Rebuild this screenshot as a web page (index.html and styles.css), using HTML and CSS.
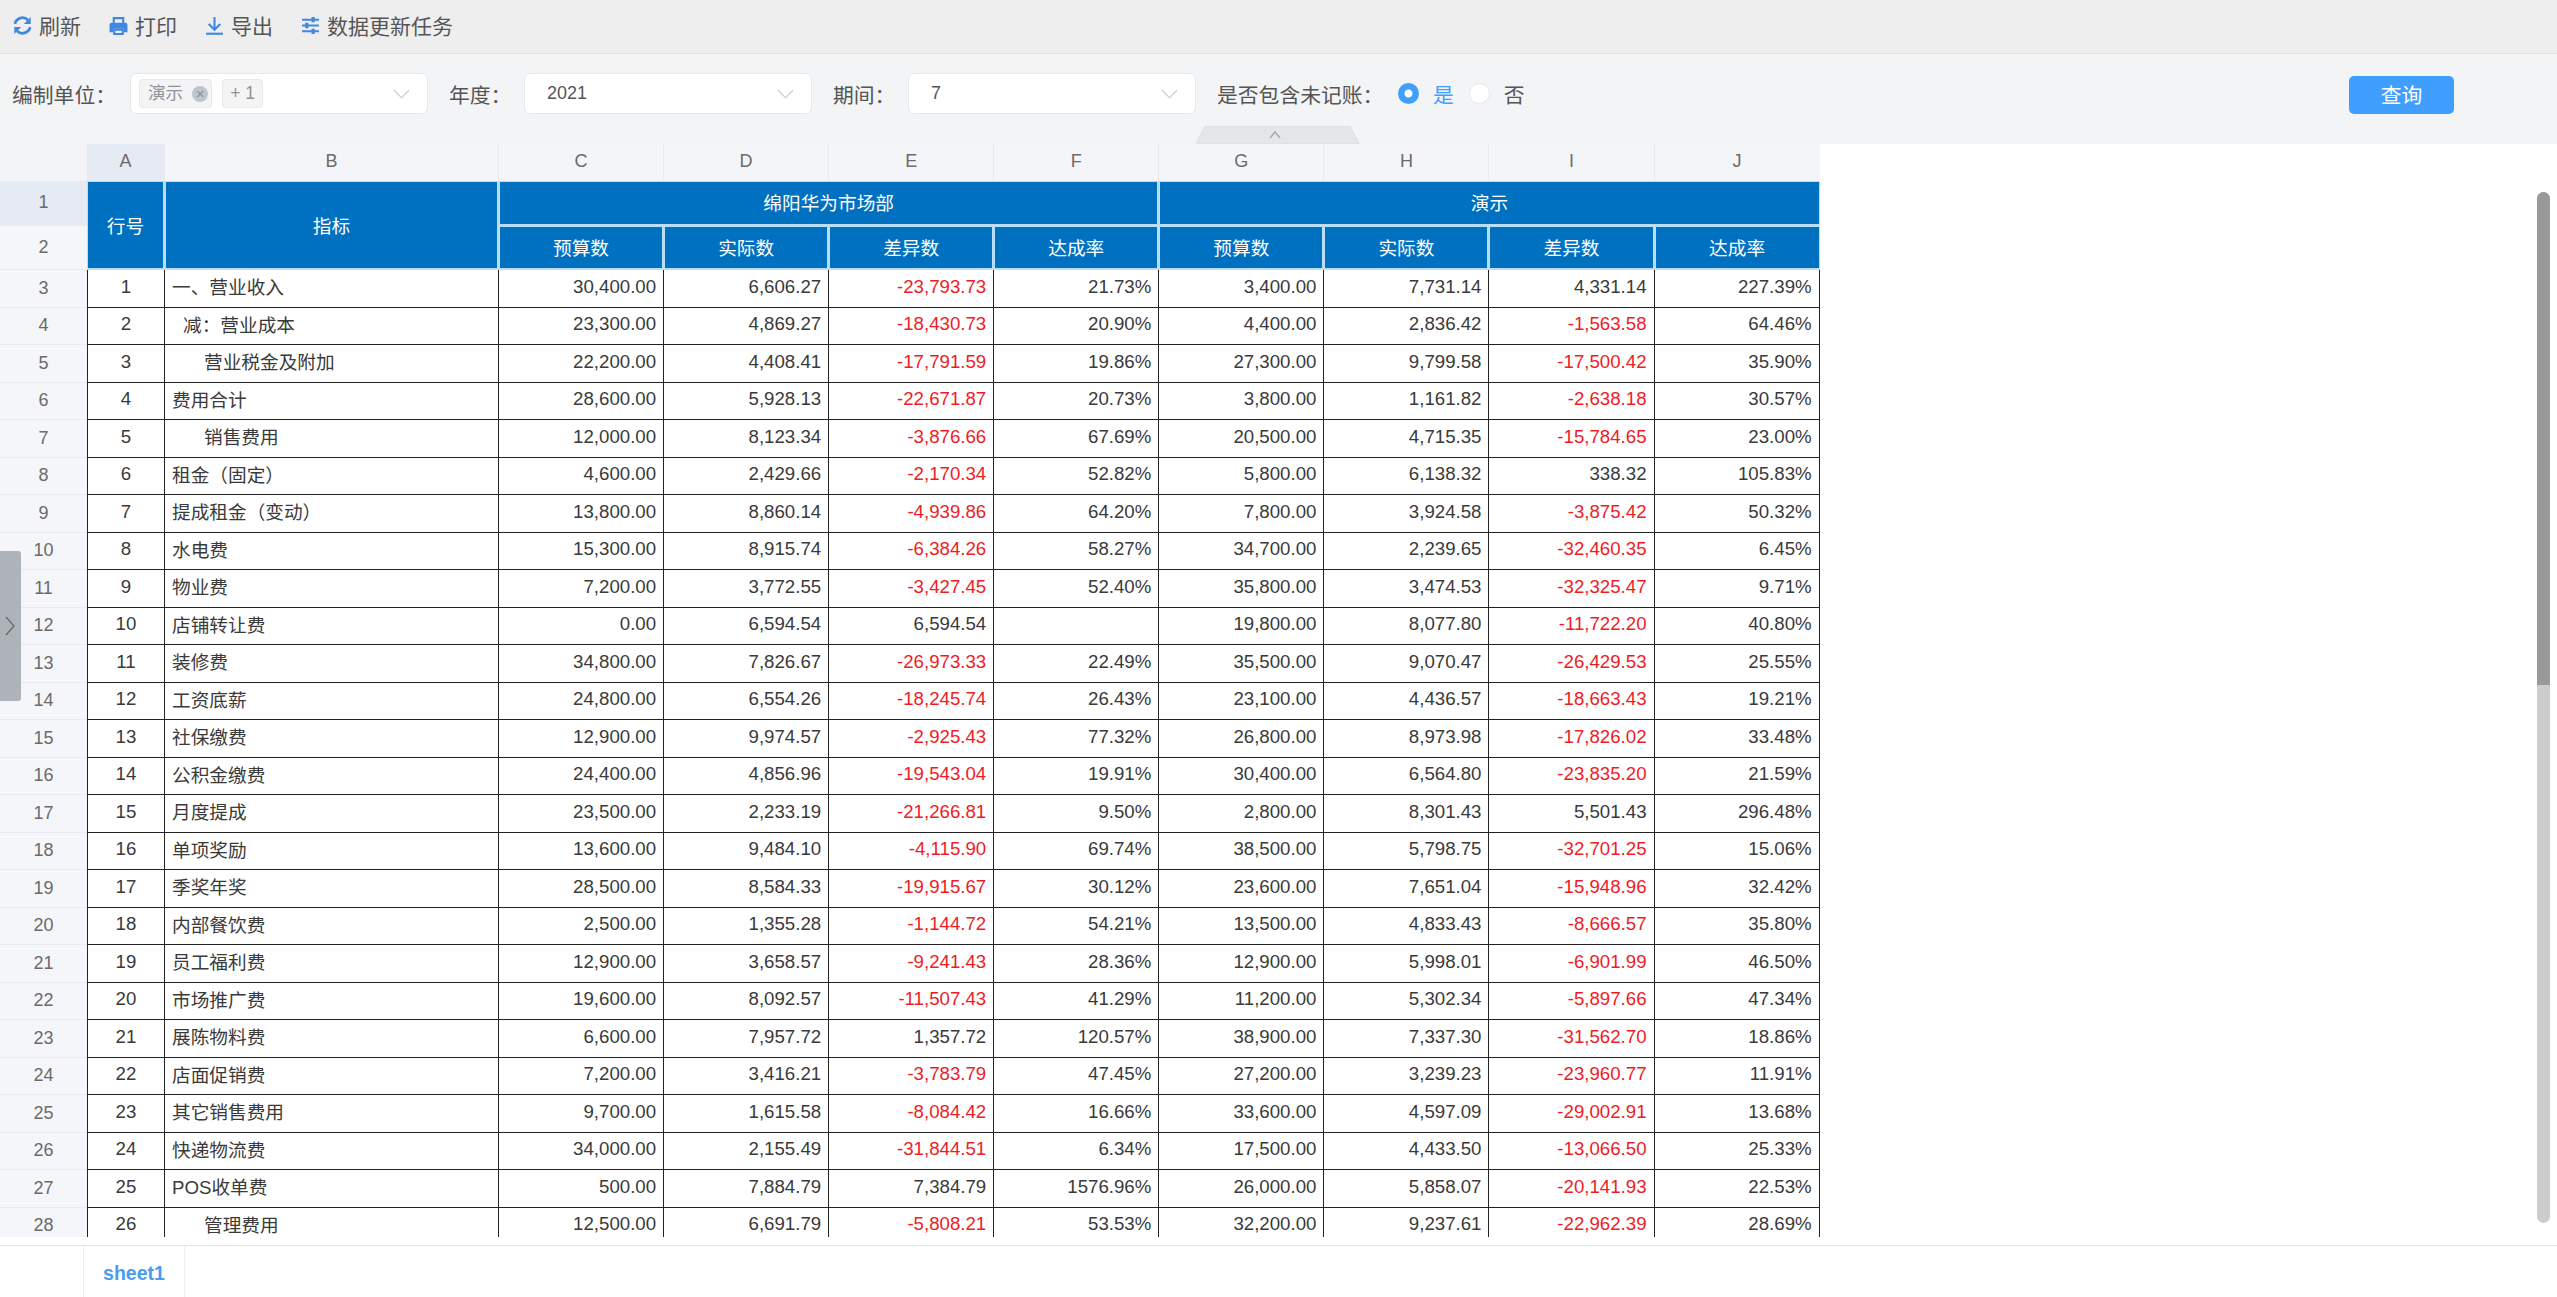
FILE: index.html
```html
<!DOCTYPE html>
<html lang="zh-CN">
<head>
	<meta charset="UTF-8">
	<title>预算分析</title>
	<link rel="stylesheet" href="styles.css">
</head>
<body>
	<!-- toolbar -->
	<div class="toolbar">
		<a class="tool">
			<svg class="tool-icon" viewBox="0 0 18 18"><path class="thick" d="M1.800 7.500A7.400 7.400 0 0 1 14.200 3.800" /><path class="thick" d="M16.200 10.500A7.400 7.400 0 0 1 3.800 14.200" /><path class="solid" d="M16.800 1v6.500h-6.500zM1.200 17v-6.500h6.500z" /></svg>
			<span>刷新</span>
		</a>
		<a class="tool">
			<svg class="tool-icon" viewBox="0 0 18 18"><path d="M4.500 7V2h9v5" /><path class="solid" d="M2.500 6.500h13a2 2 0 0 1 2 2v7h-3.500v-3.500h-10v3.500h-3.500v-7a2 2 0 0 1 2-2z" /><path d="M5 13h8v4H5z" /></svg>
			<span>打印</span>
		</a>
		<a class="tool">
			<svg class="tool-icon" viewBox="0 0 18 18"><path d="M9 1v11" /><path d="M3.500 7.500L9 13l5.500-5.500" /><path d="M1 16.800h16" /></svg>
			<span>导出</span>
		</a>
		<a class="tool">
			<svg class="tool-icon" viewBox="0 0 18 18"><path d="M1 3.500h16M1 9h16M1 14.500h16" /><path class="solid" d="M10 1h3v5h-3zM4 6.500h3v5H4zM10 12h3v5h-3z" /></svg>
			<span>数据更新任务</span>
		</a>
	</div>

	<!-- filter -->
	<div class="filter-bar">
		<div class="field field-unit">
			<label>编制单位：</label>
			<div class="select">
				<span class="tag">演示<i class="tag-close">×</i></span>
				<span class="tag tag-more">+ 1</span>
				<svg class="arrow" viewBox="0 0 18 10"><path d="M1 1l8 8 8-8" /></svg>
			</div>
		</div>
		<div class="field field-year">
			<label>年度：</label>
			<div class="select select-text">2021<svg class="arrow" viewBox="0 0 18 10"><path d="M1 1l8 8 8-8" /></svg></div>
		</div>
		<div class="field field-year">
			<label>期间：</label>
			<div class="select select-text">7<svg class="arrow" viewBox="0 0 18 10"><path d="M1 1l8 8 8-8" /></svg></div>
		</div>
		<div class="field">
			<label class="label-post">是否包含未记账：</label>
			<span class="radio radio-on"></span><span class="radio-text radio-text-on">是</span>
			<span class="radio"></span><span class="radio-text">否</span>
		</div>
		<button class="query-btn">查询</button>
		<div class="collapse-tab">
			<svg viewBox="0 0 163 18"><path class="tab-shape" d="M0 18L9 0h145l9 18z" /><path class="tab-arrow" d="M74 12l5-6 5 6" /></svg>
		</div>
	</div>

	<!-- sheet -->
	<div class="sheet">
		<table class="grid">
			<colgroup>
				<col class="w-head"><col class="w-a"><col class="w-b">
				<col class="w-n"><col class="w-n"><col class="w-n"><col class="w-n">
				<col class="w-n"><col class="w-n"><col class="w-n"><col class="w-n">
			</colgroup>
			<thead>
				<tr class="letters">
					<th class="corner"></th><th class="letter-on">A</th><th>B</th><th>C</th><th>D</th><th>E</th><th>F</th><th>G</th><th>H</th><th>I</th><th>J</th>
				</tr>
				<tr class="title">
					<th class="row-no row-on">1</th><th class="blue" rowspan="2">行号</th><th class="blue" rowspan="2">指标</th><th class="blue" colspan="4">绵阳华为市场部</th><th class="blue" colspan="4">演示</th>
				</tr>
				<tr class="title">
					<th class="row-no">2</th><th class="blue">预算数</th><th class="blue">实际数</th><th class="blue">差异数</th><th class="blue">达成率</th><th class="blue">预算数</th><th class="blue">实际数</th><th class="blue">差异数</th><th class="blue">达成率</th>
				</tr>
			</thead>
			<tbody>
				<tr><th class="row-no">3</th><td class="idx">1</td><td class="name">一、营业收入</td><td>30,400.00</td><td>6,606.27</td><td class="neg">-23,793.73</td><td>21.73%</td><td>3,400.00</td><td>7,731.14</td><td>4,331.14</td><td>227.39%</td></tr>
				<tr><th class="row-no">4</th><td class="idx">2</td><td class="name lv1">减：营业成本</td><td>23,300.00</td><td>4,869.27</td><td class="neg">-18,430.73</td><td>20.90%</td><td>4,400.00</td><td>2,836.42</td><td class="neg">-1,563.58</td><td>64.46%</td></tr>
				<tr><th class="row-no">5</th><td class="idx">3</td><td class="name lv2">营业税金及附加</td><td>22,200.00</td><td>4,408.41</td><td class="neg">-17,791.59</td><td>19.86%</td><td>27,300.00</td><td>9,799.58</td><td class="neg">-17,500.42</td><td>35.90%</td></tr>
				<tr><th class="row-no">6</th><td class="idx">4</td><td class="name">费用合计</td><td>28,600.00</td><td>5,928.13</td><td class="neg">-22,671.87</td><td>20.73%</td><td>3,800.00</td><td>1,161.82</td><td class="neg">-2,638.18</td><td>30.57%</td></tr>
				<tr><th class="row-no">7</th><td class="idx">5</td><td class="name lv2">销售费用</td><td>12,000.00</td><td>8,123.34</td><td class="neg">-3,876.66</td><td>67.69%</td><td>20,500.00</td><td>4,715.35</td><td class="neg">-15,784.65</td><td>23.00%</td></tr>
				<tr><th class="row-no">8</th><td class="idx">6</td><td class="name">租金（固定）</td><td>4,600.00</td><td>2,429.66</td><td class="neg">-2,170.34</td><td>52.82%</td><td>5,800.00</td><td>6,138.32</td><td>338.32</td><td>105.83%</td></tr>
				<tr><th class="row-no">9</th><td class="idx">7</td><td class="name">提成租金（变动）</td><td>13,800.00</td><td>8,860.14</td><td class="neg">-4,939.86</td><td>64.20%</td><td>7,800.00</td><td>3,924.58</td><td class="neg">-3,875.42</td><td>50.32%</td></tr>
				<tr><th class="row-no">10</th><td class="idx">8</td><td class="name">水电费</td><td>15,300.00</td><td>8,915.74</td><td class="neg">-6,384.26</td><td>58.27%</td><td>34,700.00</td><td>2,239.65</td><td class="neg">-32,460.35</td><td>6.45%</td></tr>
				<tr><th class="row-no">11</th><td class="idx">9</td><td class="name">物业费</td><td>7,200.00</td><td>3,772.55</td><td class="neg">-3,427.45</td><td>52.40%</td><td>35,800.00</td><td>3,474.53</td><td class="neg">-32,325.47</td><td>9.71%</td></tr>
				<tr><th class="row-no">12</th><td class="idx">10</td><td class="name">店铺转让费</td><td>0.00</td><td>6,594.54</td><td>6,594.54</td><td></td><td>19,800.00</td><td>8,077.80</td><td class="neg">-11,722.20</td><td>40.80%</td></tr>
				<tr><th class="row-no">13</th><td class="idx">11</td><td class="name">装修费</td><td>34,800.00</td><td>7,826.67</td><td class="neg">-26,973.33</td><td>22.49%</td><td>35,500.00</td><td>9,070.47</td><td class="neg">-26,429.53</td><td>25.55%</td></tr>
				<tr><th class="row-no">14</th><td class="idx">12</td><td class="name">工资底薪</td><td>24,800.00</td><td>6,554.26</td><td class="neg">-18,245.74</td><td>26.43%</td><td>23,100.00</td><td>4,436.57</td><td class="neg">-18,663.43</td><td>19.21%</td></tr>
				<tr><th class="row-no">15</th><td class="idx">13</td><td class="name">社保缴费</td><td>12,900.00</td><td>9,974.57</td><td class="neg">-2,925.43</td><td>77.32%</td><td>26,800.00</td><td>8,973.98</td><td class="neg">-17,826.02</td><td>33.48%</td></tr>
				<tr><th class="row-no">16</th><td class="idx">14</td><td class="name">公积金缴费</td><td>24,400.00</td><td>4,856.96</td><td class="neg">-19,543.04</td><td>19.91%</td><td>30,400.00</td><td>6,564.80</td><td class="neg">-23,835.20</td><td>21.59%</td></tr>
				<tr><th class="row-no">17</th><td class="idx">15</td><td class="name">月度提成</td><td>23,500.00</td><td>2,233.19</td><td class="neg">-21,266.81</td><td>9.50%</td><td>2,800.00</td><td>8,301.43</td><td>5,501.43</td><td>296.48%</td></tr>
				<tr><th class="row-no">18</th><td class="idx">16</td><td class="name">单项奖励</td><td>13,600.00</td><td>9,484.10</td><td class="neg">-4,115.90</td><td>69.74%</td><td>38,500.00</td><td>5,798.75</td><td class="neg">-32,701.25</td><td>15.06%</td></tr>
				<tr><th class="row-no">19</th><td class="idx">17</td><td class="name">季奖年奖</td><td>28,500.00</td><td>8,584.33</td><td class="neg">-19,915.67</td><td>30.12%</td><td>23,600.00</td><td>7,651.04</td><td class="neg">-15,948.96</td><td>32.42%</td></tr>
				<tr><th class="row-no">20</th><td class="idx">18</td><td class="name">内部餐饮费</td><td>2,500.00</td><td>1,355.28</td><td class="neg">-1,144.72</td><td>54.21%</td><td>13,500.00</td><td>4,833.43</td><td class="neg">-8,666.57</td><td>35.80%</td></tr>
				<tr><th class="row-no">21</th><td class="idx">19</td><td class="name">员工福利费</td><td>12,900.00</td><td>3,658.57</td><td class="neg">-9,241.43</td><td>28.36%</td><td>12,900.00</td><td>5,998.01</td><td class="neg">-6,901.99</td><td>46.50%</td></tr>
				<tr><th class="row-no">22</th><td class="idx">20</td><td class="name">市场推广费</td><td>19,600.00</td><td>8,092.57</td><td class="neg">-11,507.43</td><td>41.29%</td><td>11,200.00</td><td>5,302.34</td><td class="neg">-5,897.66</td><td>47.34%</td></tr>
				<tr><th class="row-no">23</th><td class="idx">21</td><td class="name">展陈物料费</td><td>6,600.00</td><td>7,957.72</td><td>1,357.72</td><td>120.57%</td><td>38,900.00</td><td>7,337.30</td><td class="neg">-31,562.70</td><td>18.86%</td></tr>
				<tr><th class="row-no">24</th><td class="idx">22</td><td class="name">店面促销费</td><td>7,200.00</td><td>3,416.21</td><td class="neg">-3,783.79</td><td>47.45%</td><td>27,200.00</td><td>3,239.23</td><td class="neg">-23,960.77</td><td>11.91%</td></tr>
				<tr><th class="row-no">25</th><td class="idx">23</td><td class="name">其它销售费用</td><td>9,700.00</td><td>1,615.58</td><td class="neg">-8,084.42</td><td>16.66%</td><td>33,600.00</td><td>4,597.09</td><td class="neg">-29,002.91</td><td>13.68%</td></tr>
				<tr><th class="row-no">26</th><td class="idx">24</td><td class="name">快递物流费</td><td>34,000.00</td><td>2,155.49</td><td class="neg">-31,844.51</td><td>6.34%</td><td>17,500.00</td><td>4,433.50</td><td class="neg">-13,066.50</td><td>25.33%</td></tr>
				<tr><th class="row-no">27</th><td class="idx">25</td><td class="name">POS收单费</td><td>500.00</td><td>7,884.79</td><td>7,384.79</td><td>1576.96%</td><td>26,000.00</td><td>5,858.07</td><td class="neg">-20,141.93</td><td>22.53%</td></tr>
				<tr><th class="row-no">28</th><td class="idx">26</td><td class="name lv2">管理费用</td><td>12,500.00</td><td>6,691.79</td><td class="neg">-5,808.21</td><td>53.53%</td><td>32,200.00</td><td>9,237.61</td><td class="neg">-22,962.39</td><td>28.69%</td></tr>
			</tbody>
		</table>
		<div class="side-handle">
			<svg viewBox="0 0 10 20"><path d="M1 1l8 9-8 9" /></svg>
		</div>
		<div class="scroll-track"><div class="scroll-thumb"></div></div>
	</div>

	<!-- sheet tabs -->
	<div class="tabs">
		<a class="tab">sheet1</a>
	</div>
</body>
</html>
```
FILE: styles.css
```css
*{
	padding: 0;
	margin: 0;
	box-sizing: border-box;
}
html,body{
	height: 100%;
}
body{
	display: flex;
	flex-direction: column;
	overflow: hidden;
	background-color: #fff;
	font-family: "Liberation Sans", "Noto Sans CJK SC", sans-serif;
	color: #555;
}

/* toolbar */
.toolbar{
	height: 54px;
	flex: none;
	display: flex;
	align-items: center;
	gap: 28px;
	padding: 0 0 3px 13px;
	background-color: #eeeeef;
	border-bottom: 1px solid #dfe0e2;
	font-size: 21px;
}
.tool{
	display: flex;
	align-items: center;
	gap: 7px;
}
.tool-icon{
	width: 19px;
	height: 19px;
	fill: none;
	stroke: #3f87e0;
	stroke-width: 2;
}
.tool-icon .solid{
	fill: #3f87e0;
	stroke: none;
}
.tool-icon .thick{
	stroke-width: 2.6;
}

/* filter */
.filter-bar{
	position: relative;
	height: 90px;
	flex: none;
	display: flex;
	align-items: flex-start;
	padding: 19px 103px 0 12px;
	background-color: #f2f4f6;
	font-size: 20.8px;
}
.field{
	display: flex;
	align-items: center;
	height: 41px;
	margin-right: 21px;
}
.field label{
	flex: none;
}
.field-unit label{
	width: 118px;
}
.field-unit .select{
	width: 298px;
	padding-left: 8px;
}
.field-year label{
	width: 75px;
}
.field-year .select{
	width: 288px;
}
.label-post{
	width: 181px;
}
.select{
	position: relative;
	display: flex;
	align-items: center;
	gap: 10px;
	height: 41px;
	background-color: #fff;
	border: 1px solid #e4e7ed;
	border-radius: 6px;
}
.select-text{
	padding-left: 22px;
	font-size: 18px;
}
.arrow{
	position: absolute;
	right: 17px;
	top: 15px;
	width: 17px;
	height: 10px;
	fill: none;
	stroke: #c0c4cc;
	stroke-width: 1.2;
}
.tag{
	display: flex;
	align-items: center;
	height: 29px;
	padding: 0 3px 0 8px;
	background-color: #f4f4f5;
	border: 1px solid #e9e9eb;
	border-radius: 4px;
	color: #909399;
	font-size: 17.6px;
	line-height: 1;
}
.tag-close{
	width: 16px;
	height: 16px;
	margin-left: 9px;
	border-radius: 50%;
	background-color: #c0c4cc;
	color: #8a8d93;
	font-style: normal;
	font-size: 15px;
	line-height: 16px;
	text-align: center;
}
.tag-more{
	width: 41px;
	padding: 0 0 0 7px;
}
.radio{
	width: 21px;
	height: 21px;
	flex: none;
	border-radius: 50%;
	background-color: #fff;
	border: 1px solid #e4e7ed;
}
.radio-on{
	background: radial-gradient(circle, #fff 3.5px, #409eff 4.5px);
	border: none;
}
.radio-text{
	margin: 0 15px 0 14px;
}
.radio-text-on{
	color: #409eff;
}
.query-btn{
	width: 105px;
	height: 38px;
	margin: 3px 0 0 auto;
	padding-bottom: 3px;
	background-color: #409eff;
	border: none;
	border-radius: 5px;
	color: #fff;
	font: inherit;
	font-size: 20.8px;
}
.collapse-tab{
	position: absolute;
	left: 1196px;
	bottom: 0;
	width: 163px;
	height: 18px;
}
.collapse-tab svg{
	display: block;
	width: 163px;
	height: 18px;
}
.tab-shape{
	fill: #e5e6e8;
	stroke: #dcdde0;
}
.tab-arrow{
	fill: none;
	stroke: #a8a9ac;
	stroke-width: 1.5;
}

/* sheet */
.sheet{
	position: relative;
	flex: 1;
	min-height: 0;
	overflow: hidden;
	background-color: #fff;
}
.grid{
	width: 1819.64px;
	table-layout: fixed;
	border-collapse: separate;
	border-spacing: 0;
	font-size: 18.67px;
	color: #3a3a3a;
}
.w-head{
	width: 87px;
}
.w-a{
	width: 78px;
}
.w-b{
	width: 334px;
}
.w-n{
	width: 165.08px;
}
.grid th{
	font-weight: normal;
}
.letters th{
	height: 37px;
	background-color: #f3f5f8;
	border-right: 1px solid #e8eaef;
	color: #6b6b6b;
	font-size: 18px;
	padding-bottom: 2px;
}
.letters .corner{
	background-color: #f2f4f6;
	border-right: none;
}
.letters th:last-child{
	border-right: none;
}
.letters .letter-on{
	background-color: #e6eaf5;
}
.title th{
	height: 44.5px;
}
.row-no{
	background-color: #f4f6fa;
	border-bottom: 1px solid #e8eaef;
	color: #6b6b6b;
	font-size: 18px;
}
.grid .row-on{
	background-color: #e6eaf5;
}
.blue{
	background-color: #0070c0;
	color: #fff;
	border-top: 1px solid #b9def5;
	border-left: 1px solid #b9def5;
	border-right: 2px solid #b9def5;
	border-bottom: 2px solid #b9def5;
	padding-bottom: 2px;
}
.title .blue:last-child{
	border-right: 1px solid #b9def5;
}
.grid tbody tr{
	height: 37.5px;
}
.grid td{
	padding: 0 7px 3px 0;
	text-align: right;
	border-right: 1px solid #222;
	border-bottom: 1px solid #222;
	white-space: nowrap;
}
.grid .idx{
	padding-right: 0;
	text-align: center;
	border-left: 1px solid #222;
}
.grid .name{
	padding: 0 0 5px 7px;
	text-align: left;
}
.grid .lv1{
	padding-left: 18px;
}
.grid .lv2{
	padding-left: 39px;
}
.grid .neg{
	color: #f01c24;
}
.side-handle{
	position: absolute;
	left: 0;
	top: 407px;
	width: 21px;
	height: 150px;
	display: flex;
	align-items: center;
	padding-left: 5px;
	background-color: #adb3b9;
	border-radius: 0 3px 3px 0;
}
.side-handle svg{
	width: 10px;
	height: 20px;
	fill: none;
	stroke: #666;
	stroke-width: 1.2;
}
.scroll-track{
	position: absolute;
	left: 2537px;
	top: 48px;
	width: 13px;
	height: 1031px;
	background-color: #ccc;
	border-radius: 7px;
}
.scroll-thumb{
	height: 493px;
	background-color: #999;
	border-radius: 7px 7px 0 0;
}

/* sheet tabs */
.tabs{
	height: 52px;
	flex: none;
	margin-top: 8px;
	padding-left: 83px;
	display: flex;
	background-color: #fff;
	border-top: 1px solid #e4e4e4;
}
.tab{
	width: 102px;
	display: flex;
	align-items: center;
	justify-content: center;
	padding-top: 3px;
	border-left: 1px solid #eee;
	border-right: 1px solid #eee;
	color: #4a9cf0;
	font-size: 19.5px;
	font-weight: bold;
}
```
